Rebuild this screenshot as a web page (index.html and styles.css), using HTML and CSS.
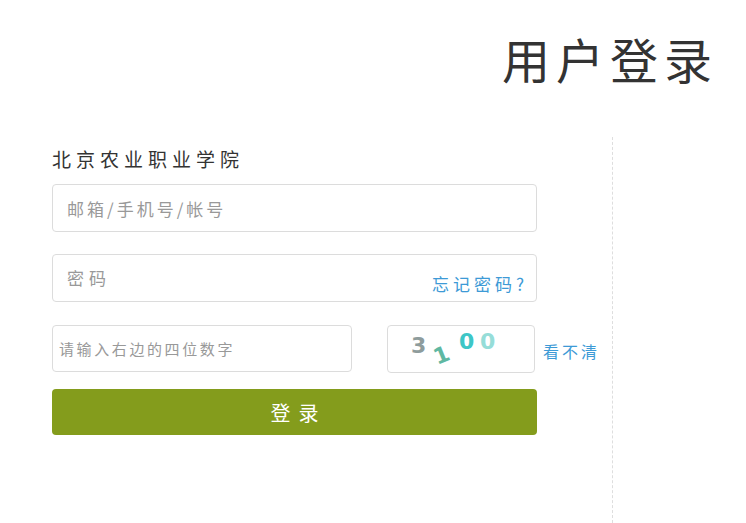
FILE: index.html
```html
<!DOCTYPE html>
<html lang="zh-CN">
<head>
<meta charset="utf-8">
<title>用户登录</title>
<link rel="stylesheet" href="styles.css">
</head>
<body>
<div class="page">
  <header class="header">
    <h1 class="title">用户登录</h1>
  </header>
  <main class="main">
    <form class="form">
      <div class="school">北京农业职业学院</div>
      <input class="field field-user" type="text" placeholder="邮箱/手机号/帐号">
      <div class="field field-pwd">
        <input class="pwd-input" type="password" placeholder="密码">
        <a class="link forgot" href="#">忘记密码?</a>
      </div>
      <div class="captcha-row">
        <input class="field field-code" type="text" placeholder="请输入右边的四位数字">
        <div class="captcha">
          <svg width="146" height="46" viewBox="0 0 146 46">
            <text x="23" y="27" class="c1">3</text>
            <text x="46" y="37" class="c2" transform="rotate(-22 53 30)">1</text>
            <text x="71" y="23" class="c3">0</text>
            <text x="92" y="23" class="c4">0</text>
          </svg>
        </div>
        <a class="link refresh" href="#">看不清</a>
      </div>
      <button class="btn" type="button">登录</button>
    </form>
    <div class="divider"></div>
  </main>
</div>
</body>
</html>
```

FILE: styles.css
```css
* { box-sizing: border-box; }
html, body {
  margin: 0;
  padding: 0;
  background: #fff;
}
body {
  font-family: "Noto Sans CJK SC", "Noto Sans", sans-serif;
  color: #333;
}
.page {
  width: 746px;
  height: 523px;
  overflow: hidden;
}
.header {
  height: 137px;
  display: flex;
  justify-content: flex-end;
  padding-right: 28px;
}
.title {
  margin: 0;
  padding-top: 30px;
  font-size: 48px;
  line-height: 56px;
  font-weight: 400;
  letter-spacing: 6px;
  color: #333;
}
.main {
  display: flex;
  height: 386px;
  padding-left: 52px;
}
.form {
  width: 485px;
  flex-shrink: 0;
  margin: 0;
  padding-top: 10px;
  display: flex;
  flex-direction: column;
}
.school {
  font-size: 19px;
  line-height: 24px;
  letter-spacing: 5px;
  color: #333;
  margin-bottom: 13px;
}
.field {
  display: block;
  width: 100%;
  height: 48px;
  border: 1px solid #dcdcdc;
  border-radius: 4px;
  background: #fff;
  font-family: inherit;
  color: #333;
  outline: none;
}
.field-user {
  padding: 0 14px;
  font-size: 17px;
  letter-spacing: 3px;
  margin-bottom: 22px;
}
input::placeholder {
  color: #999;
  opacity: 1;
}
.field-pwd {
  display: flex;
  align-items: stretch;
  padding: 0 12px 0 14px;
  margin-bottom: 23px;
}
.pwd-input {
  flex: 1;
  min-width: 0;
  border: 0;
  outline: none;
  background: transparent;
  font-family: inherit;
  font-size: 17px;
  letter-spacing: 5px;
  padding: 0 0 2px;
  color: #333;
}
.link {
  color: #3d9ad6;
  text-decoration: none;
  white-space: nowrap;
}
.forgot {
  align-self: flex-end;
  font-size: 17px;
  line-height: 20px;
  letter-spacing: 4px;
  margin-right: -4px;
  padding-bottom: 7px;
}
.captcha-row {
  display: flex;
  align-items: center;
  height: 47px;
  margin-bottom: 17px;
}
.field-code {
  width: 300px;
  flex-shrink: 0;
  height: 47px;
  padding: 0 6px;
  font-size: 15px;
  letter-spacing: 2.6px;
}
.captcha {
  width: 148px;
  height: 48px;
  flex-shrink: 0;
  margin-left: 35px;
  border: 1px solid #dcdcdc;
  border-radius: 4px;
  background: #fff;
}
.captcha svg {
  display: block;
}
.captcha text {
  font-family: "DejaVu Sans", sans-serif;
  font-size: 22px;
  font-weight: 700;
}
.c1 { fill: #8e9c9c; }
.c2 { fill: #5fb8a2; font-size: 20px; }
.c3 { fill: #3ec6c6; }
.c4 { fill: #96ddd8; }
.refresh {
  flex-shrink: 0;
  margin-left: 8px;
  font-size: 16px;
  letter-spacing: 3px;
  line-height: 20px;
  padding-top: 4px;
}
.btn {
  display: block;
  width: 100%;
  height: 46px;
  border: 0;
  border-radius: 4px;
  background: #849c1c;
  color: #fff;
  font-family: inherit;
  font-size: 20px;
  letter-spacing: 8px;
  text-indent: 8px;
  padding: 0;
  cursor: pointer;
}
.divider {
  margin-left: 75px;
  width: 0;
  border-left: 1px dashed #dedede;
  height: 100%;
}
```
